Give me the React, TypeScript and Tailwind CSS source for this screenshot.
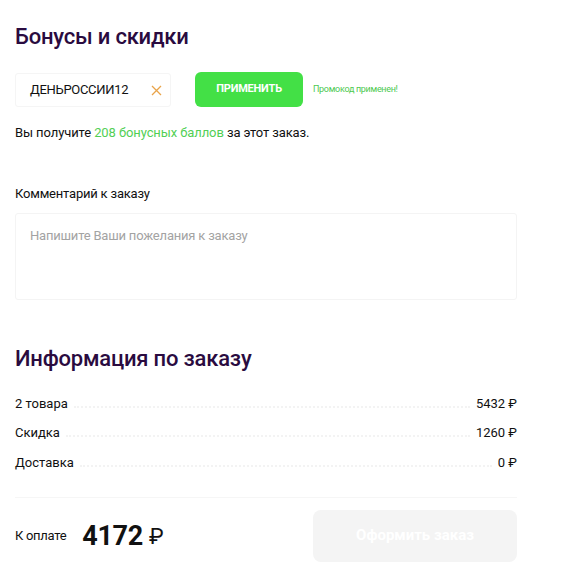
import React from "react";

const font = { fontFamily: "Roboto, 'Noto Sans', sans-serif" };

function Row({ label, value }: { label: string; value: string }) {
  return (
    <div className="flex items-end h-[29.5px] pb-[6px]">
      <span className="text-[13px] text-[#111] leading-[16px]">{label}</span>
      <span className="flex-1 mx-[6px] mb-[4px] border-b-2 border-dotted border-[#f3f3f3]" />
      <span className="text-[13px] text-[#111] leading-[16px]">{value}</span>
    </div>
  );
}

export default function App() {
  return (
    <div className="w-[568px] h-[569px] bg-white px-[15px] pt-[22px] overflow-hidden" style={font}>
      <div className="w-[502px]">
        <h2 className="text-[22px] leading-[30px] font-medium text-[#2a0b40] tracking-[-0.2px]">Бонусы и скидки</h2>

        <div className="flex items-center mt-[20px]">
          <div className="w-[156px] h-[34px] border border-[#f5f5f5] rounded-[3px] flex items-center pl-[14px] pr-[8px]">
            <span className="flex-1 text-[13px] text-[#111] tracking-[-0.3px]">ДЕНЬРОССИИ12</span>
            <svg width="11" height="11" viewBox="0 0 11 11" className="mt-[2px]">
              <path d="M1 1L10 10M10 1L1 10" stroke="#e9a44a" strokeWidth="1.3" />
            </svg>
          </div>
          <button className="ml-[24px] w-[108px] h-[35px] rounded-[6px] bg-[#43e046] text-white text-[11px] font-bold tracking-[-0.2px]">
            ПРИМЕНИТЬ
          </button>
          <span className="ml-[10px] text-[9px] text-[#4cc94f] tracking-[-0.3px]">Промокод применен!</span>
        </div>

        <p className="mt-[17px] text-[13px] leading-[18px] text-[#111] tracking-[-0.1px]">
          Вы получите <span className="text-[#52cf55]">208 бонусных баллов</span> за этот заказ.
        </p>

        <p className="mt-[43px] text-[13px] leading-[18px] text-[#111] tracking-[-0.2px]">Комментарий к заказу</p>
        <div className="mt-[10px] h-[87px] border border-[#f4f4f4] rounded-[3px] px-[14px] pt-[9px]">
          <span className="text-[13px] text-[#a3a3a3] tracking-[-0.2px]">Напишите Ваши пожелания к заказу</span>
        </div>

        <h2 className="mt-[44px] text-[22px] leading-[30px] font-medium text-[#2a0b40] tracking-[-0.2px]">Информация по заказу</h2>

        <div className="mt-[14px]">
          <Row label="2 товара" value="5432 ₽" />
          <Row label="Скидка" value="1260 ₽" />
          <Row label="Доставка" value="0 ₽" />
        </div>

        <div className="mt-[20px] border-t border-[#f6f6f6]" />

        <div className="flex items-center justify-between mt-[12px]">
          <div className="flex items-center">
            <span className="text-[13px] text-[#111] tracking-[-0.3px]">К оплате</span>
            <span className="ml-[16px] text-[27px] leading-[32px] font-bold text-[#111] tracking-[-0.3px]">4172</span>
            <span className="ml-[6px] text-[22px] leading-[32px] text-[#111] mt-[3px]">₽</span>
          </div>
          <button className="w-[204px] h-[52px] rounded-[8px] bg-[#f4f4f4] text-white text-[15px] font-bold">
            Оформить заказ
          </button>
        </div>
      </div>
    </div>
  );
}
